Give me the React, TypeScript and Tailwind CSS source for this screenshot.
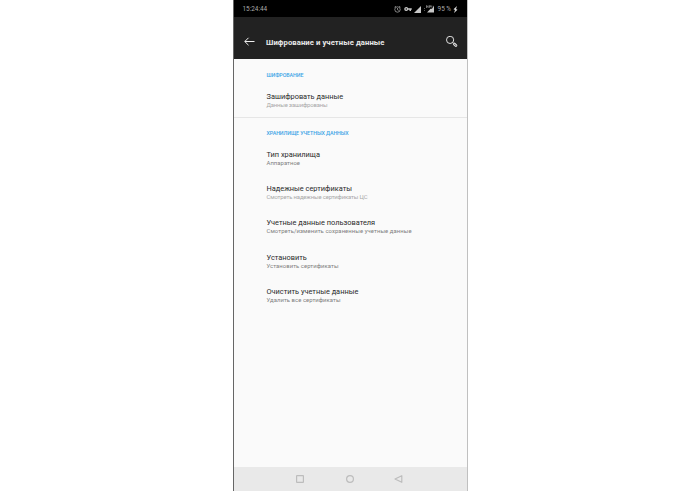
type Entry = { title: string; note: string; muted?: boolean; noteClass: string };

const encryption: Entry[] = [
  { title: 'Зашифровать данные', note: 'Данные зашифрованы', muted: true, noteClass: 'tracking-[-0.14px]' },
];

const storage: Entry[] = [
  { title: 'Тип хранилища', note: 'Аппаратное', noteClass: 'tracking-[0.05px]' },
  { title: 'Надежные сертификаты', note: 'Смотреть надежные сертификаты ЦС', muted: true, noteClass: 'tracking-[-0.13px]' },
  { title: 'Учетные данные пользователя', note: 'Смотреть/изменить сохраненные учетные данные', noteClass: 'tracking-[0.085px]' },
  { title: 'Установить', note: 'Установить сертификаты', noteClass: 'tracking-[0.07px]' },
  { title: 'Очистить учетные данные', note: 'Удалить все сертификаты', noteClass: 'tracking-[0.07px]' },
];

function Row({ entry }: { entry: Entry }) {
  return (
    <li className="h-[34.4px]">
      <div className="text-[7.4px] leading-[9px] text-[#2a2a2a]">{entry.title}</div>
      <div className={`text-[5.9px] leading-[8px] ${entry.muted ? 'text-[#a8a8a8]' : 'text-[#808080]'} ${entry.noteClass}`}>
        {entry.note}
      </div>
    </li>
  );
}

function StatusBar() {
  return (
    <div className="flex h-[17px] shrink-0 items-center justify-between bg-black pr-[9px] pl-[9px] pt-px text-[6.4px] leading-[8px] text-[#aaaaaa]">
      <span>15:24:44</span>
      <div className="flex items-center">
        <svg className="h-[7px] w-[7px]" viewBox="0 0 14 14" fill="none" stroke="#b8b8b8" strokeWidth="1.4">
          <circle cx="7" cy="7" r="5.4" />
          <path d="M1 2.500 3.800.5M13 2.500 10.200.5M7 4V7.500l2.400 1.300" />
        </svg>
        <svg className="ml-[3px] h-[6px] w-[8px]" viewBox="0 0 16 12">
          <path fill="#c4c4c4" fillRule="evenodd" d="M4.500 2a4 4 0 1 0 3.700 5.300H11V10h3V7.300h1.500V4.700H8.200A4 4 0 0 0 4.500 2Zm0 2.600a1.400 1.400 0 1 1 0 2.800 1.400 1.400 0 0 1 0-2.800Z" />
        </svg>
        <svg className="ml-[2px] h-[7px] w-[7px]" viewBox="0 0 14 14">
          <path fill="#c8c8c8" d="M14 0v14H0Z" />
        </svg>
        <svg className="ml-[3px] h-[8px] w-[10px]" viewBox="0 0 20 16">
          <path fill="#777" d="M0 6h1.500v2H0ZM0 10h1.500v2H0Z" />
          <path fill="#c8c8c8" d="M20 1v14H6l7-7.500h3Z" />
          <path fill="none" stroke="#999" strokeWidth="1.400" d="M5 6V1l3 4V1M10.500 1v5M10.500 1.500h3v2h-3M15.500 1v4" />
        </svg>
        <span className="ml-[3.500px]">95 %</span>
        <svg className="ml-[1.500px] h-[7px] w-[5px]" viewBox="0 0 10 14">
          <path fill="#d5d5d5" d="M8 0 1 6.500 4 8 2 14 9 7.500 6 6Z" />
        </svg>
      </div>
    </div>
  );
}

function AppBar() {
  return (
    <header className="flex h-[42px] shrink-0 items-center bg-[#222222] pr-[9px] pl-[10px] pt-[7px]">
      <svg className="h-[10px] w-[11px]" viewBox="0 0 11 10" fill="none" stroke="#f0f0f0" strokeWidth="1">
        <path d="M10.500 4.500H.8M4.500.8.8 4.500l3.700 3.700" />
      </svg>
      <h1 className="ml-[11.500px] pt-[2px] text-[7.700px] leading-[10px] font-bold tracking-[0.07px] text-[#e8e8e8]">Шифрование и учетные данные</h1>
      <svg className="ml-auto h-[12px] w-[12px]" viewBox="0 0 12 12" fill="none" stroke="#e0e0e0">
        <circle cx="4.100" cy="3.900" r="3.600" strokeWidth="1" />
        <path d="m6.600 6.400 1.200 1.200" strokeWidth="1" />
        <path d="m8.300 8 1.600 1.600" strokeWidth="2.800" strokeLinecap="round" />
        <path d="m8.300 8 1.600 1.600" stroke="#444" strokeWidth="1" strokeLinecap="round" />
      </svg>
    </header>
  );
}

function NavBar() {
  return (
    <nav className="flex h-[24px] shrink-0 items-center bg-[#e9e9e9] pl-[62px]">
      <svg className="h-[8px] w-[8px]" viewBox="0 0 8 8" fill="none" stroke="#bdbdbd" strokeWidth="1.200">
        <rect x=".6" y=".6" width="6.800" height="6.800" rx=".4" />
      </svg>
      <svg className="ml-[42px] h-[8px] w-[8px]" viewBox="0 0 8 8" fill="none" stroke="#bdbdbd" strokeWidth="1.200">
        <circle cx="4" cy="4" r="3.400" />
      </svg>
      <svg className="ml-[40px] h-[8px] w-[9px]" viewBox="0 0 9 8" fill="none" stroke="#bdbdbd" strokeWidth="1.200">
        <path d="M7.800.7v6.600L1 4Z" strokeLinejoin="round" />
      </svg>
    </nav>
  );
}

export default function App() {
  return (
    <div className="flex h-[491px] w-[700px] justify-center overflow-hidden bg-white font-[Roboto,sans-serif]">
      <div className="flex w-[235px] flex-col border-r border-l border-r-[#c0c0c0] border-l-[#666666] bg-[#fafafa]">
        <StatusBar />
        <AppBar />
        <main className="flex-1">
          <section className="h-[59px] border-b border-[#e6e6e6] pt-[12px] pl-[33px]">
            <h2 className="text-[5.300px] leading-[9px] font-medium tracking-[-0.05px] text-[#3ba4e6]">ШИФРОВАНИЕ</h2>
            <ul className="pt-[12px]">
              {encryption.map((e) => <Row key={e.title} entry={e} />)}
            </ul>
          </section>
          <section className="pt-[11px] pl-[33px]">
            <h2 className="text-[5.300px] leading-[9px] font-medium tracking-[-0.07px] text-[#3ba4e6]">ХРАНИЛИЩЕ УЧЕТНЫХ ДАННЫХ</h2>
            <ul className="pt-[11.500px]">
              {storage.map((e) => <Row key={e.title} entry={e} />)}
            </ul>
          </section>
        </main>
        <NavBar />
      </div>
    </div>
  );
}
